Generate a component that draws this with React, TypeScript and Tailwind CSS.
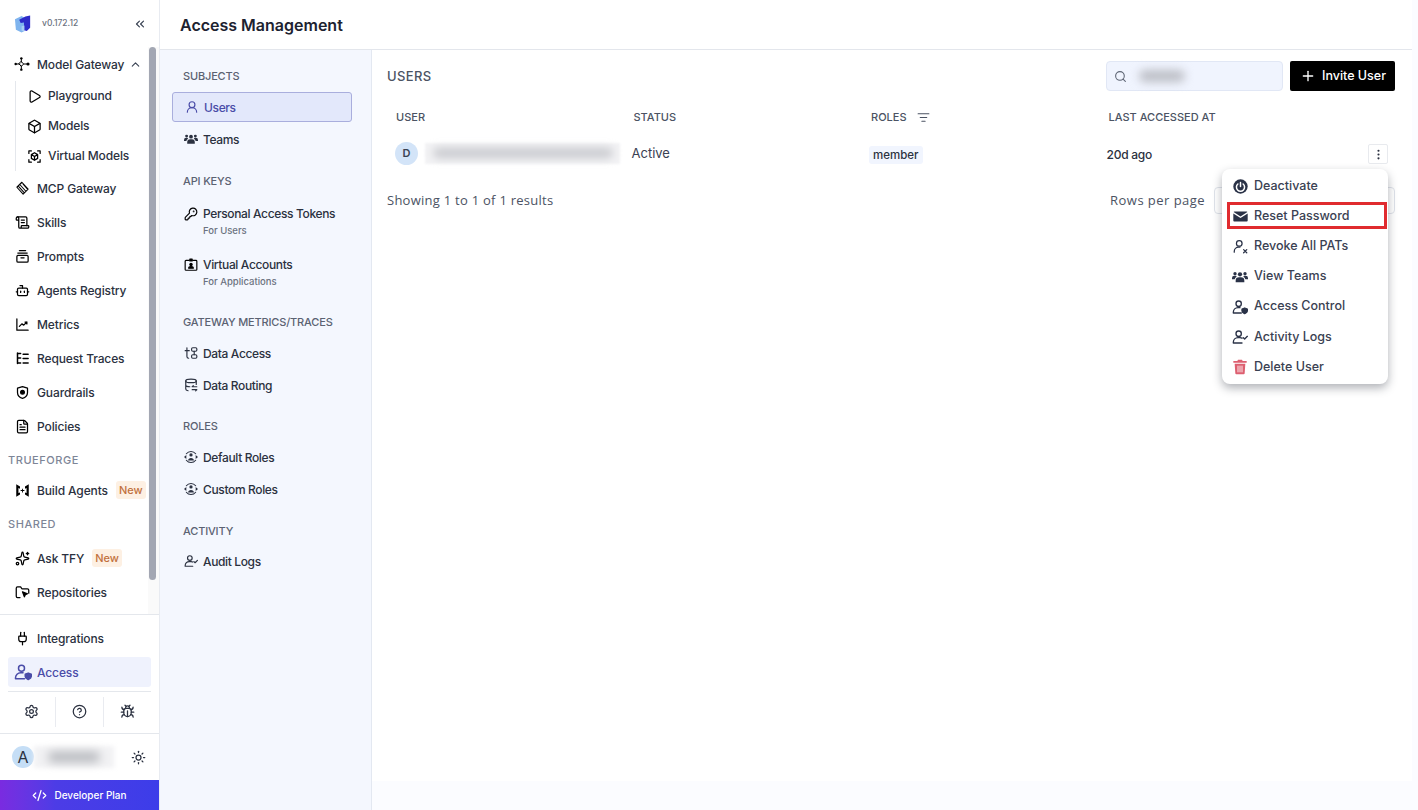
import { ReactNode } from "react";
import {
  Bot,
  Box,
  Bug,
  ChevronUp,
  ChevronsLeft,
  CircleHelp,
  CodeXml,
  EllipsisVertical,
  FileText,
  KeyRound,
  ListFilter,
  Play,
  Plug,
  Plus,
  ScrollText,
  Search,
  Settings,
  Sparkles,
  Sun,
  UserRound,
} from "lucide-react";

const ICON = "w-[15px] h-[15px] shrink-0";

function Svg({ children, className }: { children: ReactNode; className?: string }) {
  return (
    <svg
      viewBox="0 0 24 24"
      fill="none"
      stroke="currentColor"
      strokeWidth={2}
      strokeLinecap="round"
      strokeLinejoin="round"
      className={className ?? ICON}
    >
      {children}
    </svg>
  );
}

function GatewayIcon() {
  return (
    <Svg className="w-[16px] h-[16px] shrink-0">
      <path d="M3 12h6M15 12h5M11 4v5M11 15v5" strokeWidth={1.500} />
      <path d="M11 8.500l3.500 3.500-3.500 3.500L7.500 12z" strokeWidth={1.500} />
      <circle cx="21" cy="12" r="2.400" fill="currentColor" stroke="none" />
      <circle cx="11" cy="3.500" r="1.800" fill="currentColor" stroke="none" />
      <circle cx="11" cy="20.500" r="1.800" fill="currentColor" stroke="none" />
      <circle cx="2.500" cy="12" r="1.800" fill="currentColor" stroke="none" />
    </Svg>
  );
}

function VirtualIcon() {
  return (
    <Svg>
      <path d="M3 7V3h4M17 3h4v4M21 17v4h-4M7 21H3v-4" />
      <path d="M12 6l5 3v6l-5 3-5-3V9zM7 9l5 3 5-3M12 12v6" />
    </Svg>
  );
}

function McpIcon() {
  return (
    <Svg>
      <path d="M11 2 3 10l10 11 8-8L11 2zM8 6l9 10M6 9l9 10M13 5l6 7" strokeWidth={1.700} />
    </Svg>
  );
}

function PromptsIcon() {
  return (
    <Svg>
      <path d="M7 2.500h10M4.500 6.500h15" />
      <rect x="3" y="10" width="18" height="11" rx="2" />
      <path d="M9.500 14h5" />
    </Svg>
  );
}

function ShieldDotIcon() {
  return (
    <Svg>
      <path d="M12 2.500 20 5v7c0 5-3.500 8-8 9.500C7.500 20 4 17 4 12V5z" />
      <circle cx="12" cy="11.500" r="3" fill="currentColor" />
    </Svg>
  );
}

function MetricsIcon() {
  return (
    <Svg>
      <path d="M3 3v18h18" />
      <path d="m7 15 4-4 3 2 5-5M16 8h3v3" />
    </Svg>
  );
}

function TracesIcon() {
  return (
    <Svg>
      <path d="M4 3v17M4 11h5M4 19h5M4 4h5M13 5h8M13 12h8M13 19h8" strokeWidth={2.400} />
    </Svg>
  );
}

function BracketsIcon() {
  return (
    <svg viewBox="0 0 24 24" className={ICON} fill="currentColor">
      <path d="M2 2l6 3.500V9L5.500 8v8L8 15v3.500L2 22zM22 2l-6 3.500V9l2.500-1v8L16 15v3.500l6 3.500z" />
      <path d="M11.300 9h1.400v2.300H15v1.400h-2.300V15h-1.400v-2.300H9v-1.400h2.300z" />
    </svg>
  );
}

function RepoIcon() {
  return (
    <Svg>
      <path d="M8 20H4a2 2 0 0 1-2-2V5a2 2 0 0 1 2-2h5l2 3h9a2 2 0 0 1 2 2v5" />
      <path d="m12 11 8 3-3.500 1.500L15 19z" fill="currentColor" />
    </Svg>
  );
}

function UserShieldIcon({ className }: { className?: string }) {
  return (
    <Svg className={className ?? "w-[18px] h-[18px] shrink-0"}>
      <circle cx="10" cy="7" r="4" />
      <path d="M2 21v-1a7 7 0 0 1 7-7h3M2 21h12" />
      <path d="M19 13.500 23 15v3c0 2-2 3-4 4-2-1-4-2-4-4v-3z" fill="currentColor" />
    </Svg>
  );
}

function UserCheckSmallIcon({ className }: { className?: string }) {
  return (
    <Svg className={className ?? ICON}>
      <circle cx="10" cy="7" r="4" />
      <path d="M2 21v-1a7 7 0 0 1 7-7h3a7 7 0 0 1 3 .8M2 21h13M17 13l2 2 4-4" />
    </Svg>
  );
}

function UserXSmallIcon({ className }: { className?: string }) {
  return (
    <Svg className={className ?? ICON}>
      <circle cx="10" cy="7" r="4.500" />
      <path d="M2 21v-1a7 7 0 0 1 7-7h2M17 17l5 5M22 17l-5 5" />
    </Svg>
  );
}

function TeamIcon({ className }: { className?: string }) {
  return (
    <svg viewBox="0 0 24 24" fill="currentColor" className={className ?? ICON}>
      <circle cx="12" cy="8" r="3.200" />
      <circle cx="4.500" cy="7" r="2.500" />
      <circle cx="19.500" cy="7" r="2.500" />
      <path d="M5.500 20v-2.500a5 5 0 0 1 5-5h3a5 5 0 0 1 5 5V20zM0 15.500v-2A3.500 3.500 0 0 1 3.500 10H6l1 1.500a6 6 0 0 0-3 4zM24 15.500v-2a3.500 3.500 0 0 0-3.500-3.500H18l-1 1.500a6 6 0 0 1 3 4z" />
    </svg>
  );
}

function AccountBoxIcon() {
  return (
    <Svg className="w-[14px] h-[14px] shrink-0">
      <path d="M9 4H3.500A1.500 1.500 0 0 0 2 5.500v14A1.500 1.500 0 0 0 3.500 21h17a1.500 1.500 0 0 0 1.500-1.500v-14A1.500 1.500 0 0 0 20.500 4H15" />
      <path d="M10 2h4v3h-4z" fill="currentColor" />
      <circle cx="12" cy="11" r="2" fill="currentColor" />
      <path d="M8 17.500c0-2 1.500-3 4-3s4 1 4 3z" fill="currentColor" />
    </Svg>
  );
}

function DataAccessIcon() {
  return (
    <Svg className="w-[14px] h-[14px] shrink-0">
      <path d="M5 3v15a3 3 0 0 0 3 3M2 8h7" />
      <rect x="13" y="3" width="9" height="6" rx="2" />
      <rect x="13" y="15" width="9" height="6" rx="2" />
      <path d="M17.500 9v6" />
    </Svg>
  );
}

function RoutingIcon() {
  return (
    <Svg className="w-[14px] h-[14px] shrink-0">
      <ellipse cx="12" cy="5" rx="9" ry="3" />
      <path d="M3 5v14c0 1.500 2 2.500 4 2.800M21 5v6M3 12c0 1.500 3 3 7 3" />
      <path d="M14 15h8M14 15l2-2M22 20h-8M22 20l-2 2" />
    </Svg>
  );
}

function RoleIcon() {
  return (
    <Svg className="w-[14px] h-[14px] shrink-0">
      <path d="M4 6.500a10 10 0 0 1 16 0M20 17.500a10 10 0 0 1-16 0" strokeWidth={1.800} />
      <circle cx="12" cy="8.500" r="2.800" fill="currentColor" stroke="none" />
      <path d="M7 18c0-3 2.200-4.500 5-4.500s5 1.500 5 4.500z" fill="currentColor" stroke="none" />
      <path d="M0 12 4 8.500V15.500zM24 12 20 8.500V15.500z" fill="currentColor" stroke="none" />
    </Svg>
  );
}

function PowerCircleIcon() {
  return (
    <svg viewBox="0 0 24 24" className={ICON}>
      <circle cx="12" cy="12" r="11.500" fill="currentColor" />
      <path d="M12 5.500V12M7.800 8a6.500 6.500 0 1 0 8.400 0" fill="none" stroke="#fff" strokeWidth="2.400" strokeLinecap="round" />
    </svg>
  );
}

function MailFillIcon() {
  return (
    <svg viewBox="0 0 24 24" fill="currentColor" className={ICON}>
      <path d="M2 4h20a1.500 1.500 0 0 1 1 .7L12 12 1 4.700A1.500 1.500 0 0 1 2 4z" />
      <path d="M.5 7 12 14.500 23.500 7v11.500A1.500 1.500 0 0 1 22 20H2a1.500 1.500 0 0 1-1.500-1.500z" />
    </svg>
  );
}

function TrashFillIcon() {
  return (
    <svg viewBox="0 0 24 24" fill="#dd5f70" className="w-[16px] h-[16px] shrink-0">
      <path d="M9 1h6l1 2h6v2.500H2V3h6z" />
      <path d="M4 7h16l-1 14.500a1.500 1.500 0 0 1-1.500 1.500h-11A1.500 1.500 0 0 1 5 21.500z" />
      <path d="M9 10v10M12 10v10M15 10v10" stroke="#fff" strokeWidth="1.300" />
    </svg>
  );
}

function Logo() {
  return (
    <svg viewBox="0 0 20 20" className="w-[19px] h-[19px]">
      <path d="M1 5.500 8 2l3 2v14l-3 1.500-6-3z" fill="#7fb4ee" />
      <path d="M5.500 6 12 2.500 17 1.500v13l-3.500 3.500-3-1V9L7 9.500z" fill="#2e2bc9" />
      <path d="M8 13v4.500l3 .6V12z" fill="#a9cdf4" />
    </svg>
  );
}

function NavRow({
  icon,
  label,
  badge,
  after,
  sub,
}: {
  icon: ReactNode;
  label: string;
  badge?: boolean;
  after?: ReactNode;
  sub?: boolean;
}) {
  return (
    <div className={sub ? "h-[30px] flex items-center gap-[6px] pl-[10px]" : "h-[34px] flex items-center gap-[7px] pl-[14px]"}>
      <span className="w-[16px] flex justify-center">{icon}</span>
      <span className={`text-[12px] tracking-[-0.01em] font-medium text-[#2b3140] whitespace-nowrap ${sub ? "" : "pt-[2px]"}`}>{label}</span>
      {badge && (
        <span className="ml-[1px] h-[18px] px-[3px] pt-[1px] flex items-center rounded-[3px] bg-[#fdf0e3] text-[11px] font-medium text-[#c2703d]">
          New
        </span>
      )}
      {after}
    </div>
  );
}

function SideHeading({ children, className }: { children: ReactNode; className: string }) {
  return (
    <div className={`flex items-center pl-[8px] text-[11px] font-medium tracking-[0.05em] text-[#7d8597] ${className}`}>
      {children}
    </div>
  );
}

function Sidebar() {
  return (
    <aside className="w-[160px] shrink-0 flex flex-col border-r border-[#e8ebf1] bg-white">
      <div className="h-[47px] flex items-center pl-[14px] pr-[12px]">
        <Logo />
        <span className="ml-[9px] text-[8.500px] font-medium text-[#6b7280]">v0.172.12</span>
        <ChevronsLeft className="ml-auto w-[14px] h-[14px] text-[#384152]" />
      </div>
      <div className="h-[568px] flex border-b border-[#e4e7ec]">
        <div className="flex-1 min-w-0">
          <NavRow
            icon={<GatewayIcon />}
            label="Model Gateway"
            after={<ChevronUp className="-ml-[2px] w-[13px] h-[13px] text-[#384152]" />}
          />
          <div className="ml-[15px] border-l border-[#e4e7ec]">
            <NavRow sub icon={<Play className={ICON} />} label="Playground" />
            <NavRow sub icon={<Box className={ICON} />} label="Models" />
            <NavRow sub icon={<VirtualIcon />} label="Virtual Models" />
          </div>
          <NavRow icon={<McpIcon />} label="MCP Gateway" />
          <NavRow icon={<ScrollText className={ICON} />} label="Skills" />
          <NavRow icon={<PromptsIcon />} label="Prompts" />
          <NavRow icon={<Bot className={ICON} />} label="Agents Registry" />
          <NavRow icon={<MetricsIcon />} label="Metrics" />
          <NavRow icon={<TracesIcon />} label="Request Traces" />
          <NavRow icon={<ShieldDotIcon />} label="Guardrails" />
          <NavRow icon={<FileText className={ICON} />} label="Policies" />
          <SideHeading className="h-[30px] pt-[4px]">TRUEFORGE</SideHeading>
          <NavRow icon={<BracketsIcon />} label="Build Agents" badge />
          <SideHeading className="h-[34px]">SHARED</SideHeading>
          <NavRow icon={<Sparkles className={ICON} />} label="Ask TFY" badge />
          <NavRow icon={<RepoIcon />} label="Repositories" />
        </div>
        <div className="w-[11px] shrink-0 bg-[#fafafa] pl-[1px] pr-[3px]">
          <div className="h-[533px] rounded-full bg-[#a3a7b3]" />
        </div>
      </div>
      <div className="pt-[6px]">
        <NavRow icon={<Plug className={ICON} />} label="Integrations" />
        <div className="mx-[8px] mt-[2px] h-[30px] rounded-[3px] bg-[#eff2fd] flex items-center gap-[5px] pl-[6px] text-[#4a4ca8]">
          <UserShieldIcon />
          <span className="pt-[2px] text-[12px] tracking-[-0.01em] font-medium">Access</span>
        </div>
      </div>
      <div className="mx-[8px] mt-[4px] h-[42px] pb-[2px] border-t border-[#e4e7ec] flex items-center">
        <div className="flex-1 h-[30px] flex items-center justify-center text-[#2b3140]">
          <Settings className="w-[15px] h-[15px]" />
        </div>
        <div className="flex-1 h-[30px] flex items-center justify-center border-x border-[#e9ebf0] text-[#2b3140]">
          <CircleHelp className="w-[15px] h-[15px]" />
        </div>
        <div className="flex-1 h-[30px] flex items-center justify-center text-[#2b3140]">
          <Bug className="w-[15px] h-[15px]" />
        </div>
      </div>
      <div className="h-[47px] border-t border-[#e4e7ec] flex items-center pl-[12px] pr-[13px]">
        <div className="w-[22px] h-[22px] rounded-full bg-[#c5def6] flex items-center justify-center text-[16px] text-[#2b3140]">
          A
        </div>
        <div className="w-[80px] h-[22px] bg-[#f2f2f4] blur-[2px] flex items-center justify-center">
          <div className="w-[52px] h-[10px] rounded-full bg-[#b5b7bc] blur-[4px]" />
        </div>
        <Sun className="ml-auto w-[15px] h-[15px] text-[#2b3140]" />
      </div>
      <div className="h-[30px] bg-gradient-to-r from-[#7a2be0] via-[#4c3ce6] via-35% to-[#3c3de9] flex items-center justify-center gap-[7px] text-white">
        <CodeXml className="w-[15px] h-[15px]" />
        <span className="text-[10px] font-medium">Developer Plan</span>
      </div>
    </aside>
  );
}

function SubHeading({ children, className }: { children: ReactNode; className?: string }) {
  return (
    <div className={`h-[16px] pl-[11px] flex items-center text-[11px] font-medium tracking-[-0.015em] text-[#5b6272] ${className ?? "mb-[8px]"}`}>
      {children}
    </div>
  );
}

function SubRow({ icon, label, hint, active }: { icon: ReactNode; label: string; hint?: string; active?: boolean }) {
  if (hint) {
    return (
      <div className="h-[49px] pt-[7px] mb-[2px] pl-[12px] flex items-start gap-[5px]">
        <span className="w-[14px] h-[20px] flex items-center justify-center">{icon}</span>
        <div>
          <div className="h-[20px] flex items-center text-[12px] tracking-[-0.03em] font-medium text-[#2b3140]">{label}</div>
          <div className="h-[14px] flex items-center text-[9.500px] font-medium text-[#6b7280]">{hint}</div>
        </div>
      </div>
    );
  }
  return (
    <div
      className={
        active
          ? "h-[30px] mb-[2px] pl-[12px] flex items-center gap-[5px] rounded-[3px] border border-[#a9aedd] bg-[#e3e8fb] text-[#4a4ca8]"
          : "h-[30px] mb-[2px] pl-[12px] flex items-center gap-[5px] text-[#2b3140]"
      }
    >
      <span className="w-[14px] flex justify-center">{icon}</span>
      <span className="pt-[2px] text-[12px] tracking-[-0.03em] font-medium">{label}</span>
    </div>
  );
}

function SubNav() {
  const icon = "w-[14px] h-[14px] shrink-0";
  return (
    <nav className="w-[212px] shrink-0 bg-[#f4f7fe] border-r border-[#e3e8f1] pl-[12px] pr-[19px] pt-[18px]">
      <SubHeading>SUBJECTS</SubHeading>
      <SubRow active icon={<UserRound className={icon} />} label="Users" />
      <SubRow icon={<TeamIcon className={icon} />} label="Teams" />
      <SubHeading className="mt-[19px] mb-[8px]">API KEYS</SubHeading>
      <SubRow icon={<KeyRound className={icon} />} label="Personal Access Tokens" hint="For Users" />
      <SubRow icon={<AccountBoxIcon />} label="Virtual Accounts" hint="For Applications" />
      <SubHeading className="mt-[17px] mb-[8px]">GATEWAY METRICS/TRACES</SubHeading>
      <SubRow icon={<DataAccessIcon />} label="Data Access" />
      <SubRow icon={<RoutingIcon />} label="Data Routing" />
      <SubHeading className="mt-[18px] mb-[8px]">ROLES</SubHeading>
      <SubRow icon={<RoleIcon />} label="Default Roles" />
      <SubRow icon={<RoleIcon />} label="Custom Roles" />
      <SubHeading className="mt-[19px] mb-[7px]">ACTIVITY</SubHeading>
      <SubRow icon={<UserCheckSmallIcon className={icon} />} label="Audit Logs" />
    </nav>
  );
}

const MENU = [
  { label: "Deactivate", icon: <PowerCircleIcon /> },
  { label: "Reset Password", icon: <MailFillIcon />, marked: true },
  { label: "Revoke All PATs", icon: <UserXSmallIcon /> },
  { label: "View Teams", icon: <TeamIcon className="w-[16px] h-[16px] shrink-0" /> },
  { label: "Access Control", icon: <UserShieldIcon className="w-[16px] h-[16px] shrink-0" /> },
  { label: "Activity Logs", icon: <UserCheckSmallIcon className="w-[16px] h-[16px] shrink-0" /> },
  { label: "Delete User", icon: <TrashFillIcon /> },
];

function ActionsMenu() {
  return (
    <div className="absolute left-[850px] top-[119px] w-[166px] h-[215px] rounded-[8px] bg-white shadow-[0_4px_10px_rgba(30,35,50,0.35)] pt-[2px]">
      {MENU.map((item) => (
        <div key={item.label} className="relative h-[30.200px] flex items-center gap-[6px] pl-[10px]">
          {item.marked && <div className="absolute left-[5px] top-[1px] w-[160px] h-[27px] border-[3px] border-[#e02b2f]" />}
          <span className="w-[16px] flex justify-center text-[#2a3247]">{item.icon}</span>
          <span className="text-[12.500px] font-medium text-[#3a4152]">{item.label}</span>
        </div>
      ))}
    </div>
  );
}

function Users() {
  return (
    <main className="relative flex-1 min-w-0 bg-white pl-[15px] pr-[17px] pt-[11px]">
      <div className="h-[30px] flex items-center justify-between">
        <span className="pt-[2px] text-[13px] font-medium tracking-[0.03em] text-[#4b5363]">USERS</span>
        <div className="flex gap-[7px]">
          <div className="w-[177px] h-[30px] rounded-[4px] border border-[#e1e7f5] bg-[#f0f4fe] flex items-center pl-[7px]">
            <Search className="w-[13px] h-[13px] text-[#5f6675]" />
            <div className="ml-[12px] w-[46px] h-[12px] rounded-full bg-[#bcbec5] blur-[5px]" />
          </div>
          <button className="w-[105px] h-[30px] rounded-[2px] bg-black text-white flex items-center gap-[6px] pl-[10px]">
            <Plus className="w-[16px] h-[16px]" />
            <span className="text-[12.500px] font-medium">Invite User</span>
          </button>
        </div>
      </div>
      <div className="grid grid-cols-[237.500px_237.500px_237.500px_1fr] mt-[12px] h-[28px] items-center text-[11px] font-medium text-[#4b5363]">
        <span className="pl-[9px]">USER</span>
        <span className="pl-[9px]">STATUS</span>
        <span className="pl-[9px] flex items-center gap-[10px]">
          ROLES <ListFilter className="w-[13px] h-[13px]" />
        </span>
        <span className="pl-[9px]">LAST ACCESSED AT</span>
      </div>
      <div className="grid grid-cols-[237.500px_237.500px_237.500px_1fr] h-[44px] items-center text-[#2b3140]">
        <div className="pl-[8px] flex items-center gap-[7px]">
          <div className="w-[23px] h-[23px] rounded-full bg-[#d3e4f8] flex items-center justify-center text-[11px] font-semibold text-[#3a4152]">
            D
          </div>
          <div className="w-[195px] h-[21px] bg-[#f3f3f5] blur-[1px] flex items-center justify-center">
            <div className="w-[180px] h-[10px] rounded-full bg-[#c8c9ce] blur-[4px]" />
          </div>
        </div>
        <span className="pl-[7px] pt-[2px] text-[13px] text-[#3a4152]">Active</span>
        <div className="pl-[7px] pb-[1px]">
          <span className="inline-flex h-[18px] items-center rounded-[3px] bg-[#f1f5fe] px-[4px] text-[11.500px] font-medium">member</span>
        </div>
        <div className="pl-[7px] pt-[2px] flex items-center justify-between pr-[7px] text-[12px] tracking-[-0.02em] font-medium">
          <span className="pt-[1px]">20d ago</span>
          <div className="w-[20px] h-[20px] border border-[#e8eaee] rounded-[2px] flex items-center justify-center">
            <EllipsisVertical className="w-[13px] h-[13px]" />
          </div>
        </div>
      </div>
      <div className="mt-[12px] h-[27px] flex items-center">
        <span className="text-[13px] tracking-[0.02em] text-[#4b5363]" style={{ fontFamily: "'Open Sans', sans-serif" }}>
          Showing 1 to 1 of 1 results
        </span>
        <span className="ml-auto text-[13px] tracking-[0.035em] text-[#4b5363]" style={{ fontFamily: "'Open Sans', sans-serif" }}>
          Rows per page
        </span>
        <div className="ml-[9px] w-[181px] h-[27px] rounded-[4px] border border-[#dfe3ea]" />
      </div>
      <ActionsMenu />
    </main>
  );
}

export default function App() {
  return (
    <div className="w-[1418px] h-[810px] flex overflow-hidden bg-[#fbfcff] font-['Inter',sans-serif]">
      <Sidebar />
      <div className="flex-1 min-w-0 flex flex-col">
        <header className="mr-[6px] h-[50px] shrink-0 bg-white border-b border-[#e3e6ec] flex items-center pl-[20px]">
          <h1 className="text-[16px] font-semibold text-[#1d2230]">Access Management</h1>
        </header>
        <div className="flex-1 min-h-0 flex">
          <SubNav />
          <div className="flex-1 min-w-0 flex flex-col pr-[6px] pb-[29px]">
            <Users />
          </div>
        </div>
      </div>
    </div>
  );
}
